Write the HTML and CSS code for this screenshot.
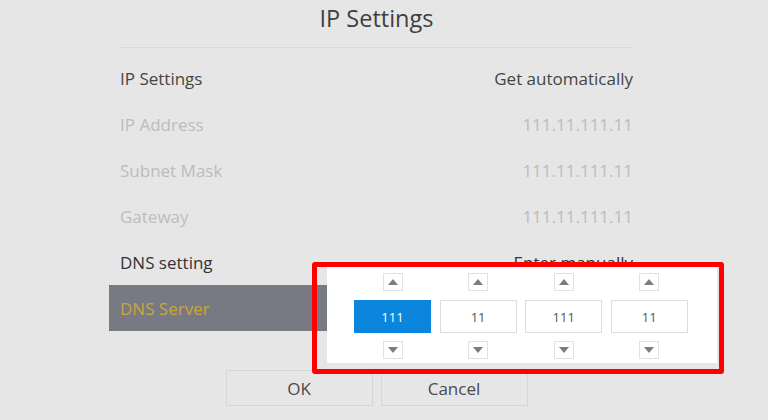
FILE: index.html
```html
<!DOCTYPE html>
<html>
<head>
<meta charset="utf-8">
<link rel="stylesheet" href="styles.css">
</head>
<body>
<div class="dialog">
  <div class="title">IP Settings</div>
  <div class="sep"></div>
  <div class="rows">
    <div class="row"><span>IP Settings</span><span>Get automatically</span></div>
    <div class="row disabled"><span>IP Address</span><span>111.11.111.11</span></div>
    <div class="row disabled"><span>Subnet Mask</span><span>111.11.111.11</span></div>
    <div class="row disabled"><span>Gateway</span><span>111.11.111.11</span></div>
    <div class="row dark"><span>DNS setting</span><span>Enter manually</span></div>
    <div class="row selected"><span>DNS Server</span><span></span></div>
  </div>
  <div class="buttons">
    <div class="btn">OK</div>
    <div class="btn">Cancel</div>
  </div>
</div>

<div class="popup">
  <div class="col">
    <div class="arrow"><svg width="10" height="6" viewBox="0 0 10 6"><polygon points="5,0 10,6 0,6" fill="#7d7d7d"/></svg></div>
    <div class="field active">111</div>
    <div class="arrow down"><svg width="10" height="6" viewBox="0 0 10 6"><polygon points="0,0 10,0 5,6" fill="#7d7d7d"/></svg></div>
  </div>
  <div class="col">
    <div class="arrow"><svg width="10" height="6" viewBox="0 0 10 6"><polygon points="5,0 10,6 0,6" fill="#7d7d7d"/></svg></div>
    <div class="field">11</div>
    <div class="arrow down"><svg width="10" height="6" viewBox="0 0 10 6"><polygon points="0,0 10,0 5,6" fill="#7d7d7d"/></svg></div>
  </div>
  <div class="col">
    <div class="arrow"><svg width="10" height="6" viewBox="0 0 10 6"><polygon points="5,0 10,6 0,6" fill="#7d7d7d"/></svg></div>
    <div class="field">111</div>
    <div class="arrow down"><svg width="10" height="6" viewBox="0 0 10 6"><polygon points="0,0 10,0 5,6" fill="#7d7d7d"/></svg></div>
  </div>
  <div class="col">
    <div class="arrow"><svg width="10" height="6" viewBox="0 0 10 6"><polygon points="5,0 10,6 0,6" fill="#7d7d7d"/></svg></div>
    <div class="field">11</div>
    <div class="arrow down"><svg width="10" height="6" viewBox="0 0 10 6"><polygon points="0,0 10,0 5,6" fill="#7d7d7d"/></svg></div>
  </div>
</div>
<div class="highlight"></div>
</body>
</html>
```

FILE: styles.css
```css
html, body {
  margin: 0;
  padding: 0;
  background: #e6e6e6;
  width: 768px;
  height: 420px;
  overflow: hidden;
  font-family: "Open Sans", "Noto Sans", sans-serif;
  color: #454545;
}

.dialog {
  margin-left: 109px;
  width: 535px;
}

.title {
  height: 36px;
  line-height: 36px;
  text-align: center;
  font-size: 23.5px;
  color: #3f3f3f;
}

.sep {
  margin: 11px 11px 0;
  height: 1px;
  background: #d9d9d9;
}

.rows {
  margin-top: 7px;
}

.row {
  height: 46px;
  padding: 0 11px;
  display: flex;
  justify-content: space-between;
  align-items: center;
  font-size: 17px;
  color: #454545;
}

.row.disabled {
  color: #bcbcbc;
}

.row.dark {
  color: #333;
}

.row.selected {
  background: #777a82;
  color: #c9a63d;
}

.buttons {
  margin-top: 39px;
  display: flex;
  justify-content: center;
  gap: 8px;
}

.btn {
  width: 145px;
  height: 34px;
  border: 1px solid #d6d6d6;
  display: flex;
  align-items: center;
  justify-content: center;
  font-size: 17px;
  color: #4a4a4a;
}

.popup {
  position: absolute;
  left: 327px;
  top: 267px;
  width: 363px;
  height: 96px;
  padding-left: 27px;
  background: #ffffff;
  display: grid;
  grid-template-columns: repeat(4, 77px);
  column-gap: 8.6px;
}

.col {
  display: flex;
  flex-direction: column;
  align-items: center;
}

.arrow {
  width: 18px;
  height: 16px;
  margin-top: 6px;
  border: 1px solid #e2e2e2;
  display: flex;
  align-items: center;
  justify-content: center;
}

.arrow.down {
  margin-top: 8px;
}

.field {
  margin-top: 9px;
  width: 75px;
  height: 31px;
  border: 1px solid #dddddd;
  display: flex;
  align-items: center;
  justify-content: center;
  font-size: 13px;
  color: #555;
}

.field.active {
  background: #0b86dc;
  border-color: #0b86dc;
  color: #ffffff;
}

.highlight {
  position: absolute;
  left: 312px;
  top: 262px;
  width: 402px;
  height: 102px;
  border: 5px solid #ff0000;
  border-radius: 3px;
}
```
